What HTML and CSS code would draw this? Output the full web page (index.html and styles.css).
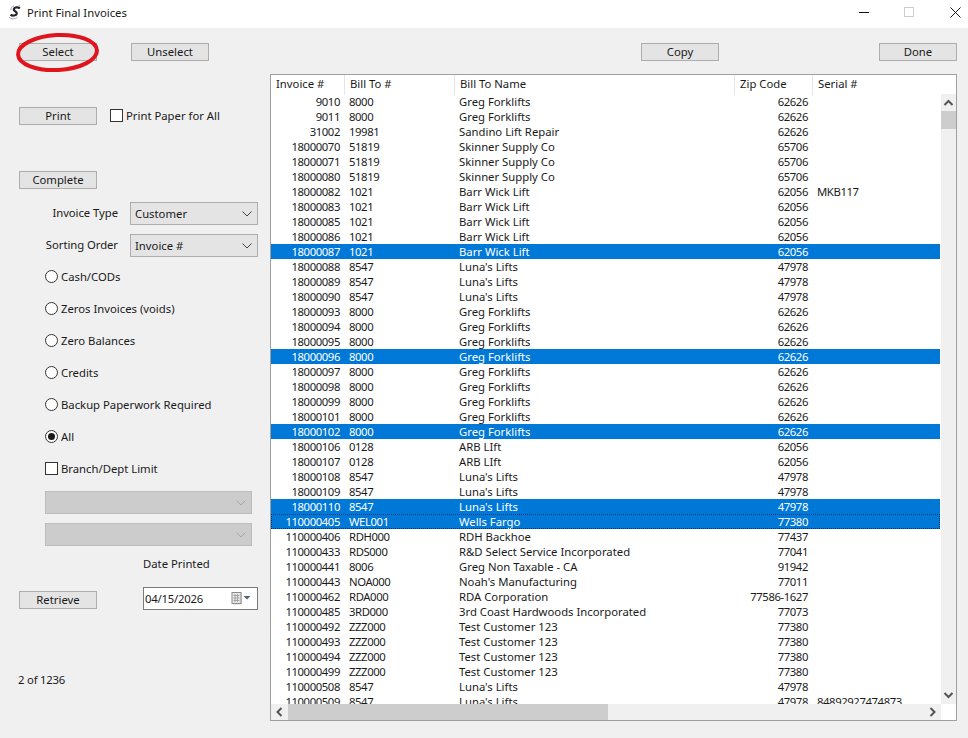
FILE: index.html
```html
<!DOCTYPE html>
<html lang="en">
<head>
<meta charset="utf-8">
<title>Print Final Invoices</title>
<link rel="stylesheet" href="styles.css">
</head>
<body>
<div class="window">
  <header class="titlebar">
    <svg class="app-icon" width="14" height="15" viewBox="0 0 14 15"><path d="M12 3.2 C10 2 6.5 2 5.8 4.2 C5.2 6.4 9.4 6 8.8 8.6 C8.2 10.8 4.5 11 2.5 9.8" fill="none" stroke="#22242c" stroke-width="2.2"/><path d="M10.5 1 L12 .5 M1 12 C3 14.500 7 14.500 9.500 12 M3 5 C2.500 3 4 1.500 6 1" fill="none" stroke="#9a9cc6" stroke-width="1"/></svg>
    <span class="title">Print Final Invoices</span>
    <div class="win-controls">
      <svg class="win-btn" width="10" height="10" viewBox="0 0 10 10"><path d="M0 5.500H10" stroke="#111" stroke-width="1"/></svg>
      <svg class="win-btn" width="10" height="10" viewBox="0 0 10 10"><rect x=".5" y=".5" width="9" height="9" fill="none" stroke="#ccc"/></svg>
      <svg class="win-btn" width="11" height="11" viewBox="0 0 11 11"><path d="M.5.5L10.500 10.500M10.500.5L.5 10.500" stroke="#111" stroke-width="1"/></svg>
    </div>
  </header>
  <div class="content">
    <div class="toolbar">
      <button class="btn">Select</button>
      <button class="btn unselect">Unselect</button>
      <button class="btn copy">Copy</button>
      <button class="btn done">Done</button>
    </div>
    <div class="main">
      <aside class="side">
        <div class="print-row">
          <button class="btn">Print</button>
          <label class="check-label"><span class="check"></span>Print Paper for All</label>
        </div>
        <button class="btn complete">Complete</button>
        <div class="field first-field"><span class="field-label">Invoice Type</span><div class="select"><span class="sel-text">Customer</span><svg class="chev" width="10" height="6" viewBox="0 0 10 6"><path d="M.5.5L5 5L9.500.5" fill="none" stroke="#444"/></svg></div></div>
        <div class="field"><span class="field-label">Sorting Order</span><div class="select"><span class="sel-text">Invoice #</span><svg class="chev" width="10" height="6" viewBox="0 0 10 6"><path d="M.5.5L5 5L9.500.5" fill="none" stroke="#444"/></svg></div></div>
        <div class="options">
          <label class="option"><span class="radio"></span>Cash/CODs</label>
          <label class="option"><span class="radio"></span>Zeros Invoices (voids)</label>
          <label class="option"><span class="radio"></span>Zero Balances</label>
          <label class="option"><span class="radio"></span>Credits</label>
          <label class="option"><span class="radio"></span>Backup Paperwork Required</label>
          <label class="option"><span class="radio on"></span>All</label>
          <label class="option"><span class="check"></span>Branch/Dept Limit</label>
        </div>
        <div class="select disabled first"><span></span><svg class="chev" width="10" height="6" viewBox="0 0 10 6"><path d="M.5.5L5 5L9.500.5" fill="none" stroke="#a8a8a8"/></svg></div>
        <div class="select disabled second"><span></span><svg class="chev" width="10" height="6" viewBox="0 0 10 6"><path d="M.5.5L5 5L9.500.5" fill="none" stroke="#a8a8a8"/></svg></div>
        <div class="date-label">Date Printed</div>
        <div class="retrieve-row">
          <button class="btn retrieve">Retrieve</button>
          <div class="date"><span class="num">04/15/2026</span>
            <svg class="cal" width="21" height="13" viewBox="0 0 21 13"><rect x="3" y="1.500" width="9" height="11" fill="#d8d8dc"/><rect x="2" y=".5" width="9" height="11" fill="#e8e8e8" stroke="#8a8a8a"/><path d="M3.500 3.500H9.500M3.500 6H9.500M3.500 8.500H9.500M5 2V10M7.500 2V10" stroke="#a5a5a5" stroke-width="1"/><path d="M13.500 4H20.500L17 7.500Z" fill="#4f6478"/></svg>
          </div>
        </div>
        <div class="count num">2 of 1236</div>
      </aside>
      <section class="list">
        <div class="list-head">
          <span class="h h1">Invoice #</span><span class="h h2">Bill To #</span><span class="h h3">Bill To Name</span><span class="h h4">Zip Code</span><span class="h h5">Serial #</span>
        </div>
        <div class="list-mid">
          <div class="viewport">
            <table class="rows">
              <colgroup><col class="c1"><col class="c2"><col class="c3"><col class="c4"><col class="c5"></colgroup>
              <tbody>
                <tr><td>9010</td><td>8000</td><td>Greg Forklifts</td><td>62626</td><td></td></tr>
                <tr><td>9011</td><td>8000</td><td>Greg Forklifts</td><td>62626</td><td></td></tr>
                <tr><td>31002</td><td>19981</td><td>Sandino Lift Repair</td><td>62626</td><td></td></tr>
                <tr><td>18000070</td><td>51819</td><td>Skinner Supply Co</td><td>65706</td><td></td></tr>
                <tr><td>18000071</td><td>51819</td><td>Skinner Supply Co</td><td>65706</td><td></td></tr>
                <tr><td>18000080</td><td>51819</td><td>Skinner Supply Co</td><td>65706</td><td></td></tr>
                <tr><td>18000082</td><td>1021</td><td>Barr Wick Lift</td><td>62056</td><td>MKB117</td></tr>
                <tr><td>18000083</td><td>1021</td><td>Barr Wick Lift</td><td>62056</td><td></td></tr>
                <tr><td>18000085</td><td>1021</td><td>Barr Wick Lift</td><td>62056</td><td></td></tr>
                <tr><td>18000086</td><td>1021</td><td>Barr Wick Lift</td><td>62056</td><td></td></tr>
                <tr class="sel"><td>18000087</td><td>1021</td><td>Barr Wick Lift</td><td>62056</td><td></td></tr>
                <tr><td>18000088</td><td>8547</td><td>Luna's Lifts</td><td>47978</td><td></td></tr>
                <tr><td>18000089</td><td>8547</td><td>Luna's Lifts</td><td>47978</td><td></td></tr>
                <tr><td>18000090</td><td>8547</td><td>Luna's Lifts</td><td>47978</td><td></td></tr>
                <tr><td>18000093</td><td>8000</td><td>Greg Forklifts</td><td>62626</td><td></td></tr>
                <tr><td>18000094</td><td>8000</td><td>Greg Forklifts</td><td>62626</td><td></td></tr>
                <tr><td>18000095</td><td>8000</td><td>Greg Forklifts</td><td>62626</td><td></td></tr>
                <tr class="sel"><td>18000096</td><td>8000</td><td>Greg Forklifts</td><td>62626</td><td></td></tr>
                <tr><td>18000097</td><td>8000</td><td>Greg Forklifts</td><td>62626</td><td></td></tr>
                <tr><td>18000098</td><td>8000</td><td>Greg Forklifts</td><td>62626</td><td></td></tr>
                <tr><td>18000099</td><td>8000</td><td>Greg Forklifts</td><td>62626</td><td></td></tr>
                <tr><td>18000101</td><td>8000</td><td>Greg Forklifts</td><td>62626</td><td></td></tr>
                <tr class="sel"><td>18000102</td><td>8000</td><td>Greg Forklifts</td><td>62626</td><td></td></tr>
                <tr><td>18000106</td><td>0128</td><td>ARB LIft</td><td>62056</td><td></td></tr>
                <tr><td>18000107</td><td>0128</td><td>ARB LIft</td><td>62056</td><td></td></tr>
                <tr><td>18000108</td><td>8547</td><td>Luna's Lifts</td><td>47978</td><td></td></tr>
                <tr><td>18000109</td><td>8547</td><td>Luna's Lifts</td><td>47978</td><td></td></tr>
                <tr class="sel"><td>18000110</td><td>8547</td><td>Luna's Lifts</td><td>47978</td><td></td></tr>
                <tr class="sel focus"><td>110000405</td><td>WEL001</td><td>Wells Fargo</td><td>77380</td><td></td></tr>
                <tr><td>110000406</td><td>RDH000</td><td>RDH Backhoe</td><td>77437</td><td></td></tr>
                <tr><td>110000433</td><td>RDS000</td><td>R&amp;D Select Service Incorporated</td><td>77041</td><td></td></tr>
                <tr><td>110000441</td><td>8006</td><td>Greg Non Taxable - CA</td><td>91942</td><td></td></tr>
                <tr><td>110000443</td><td>NOA000</td><td>Noah's Manufacturing</td><td>77011</td><td></td></tr>
                <tr><td>110000462</td><td>RDA000</td><td>RDA Corporation</td><td>77586-1627</td><td></td></tr>
                <tr><td>110000485</td><td>3RD000</td><td>3rd Coast Hardwoods Incorporated</td><td>77073</td><td></td></tr>
                <tr><td>110000492</td><td>ZZZ000</td><td>Test Customer 123</td><td>77380</td><td></td></tr>
                <tr><td>110000493</td><td>ZZZ000</td><td>Test Customer 123</td><td>77380</td><td></td></tr>
                <tr><td>110000494</td><td>ZZZ000</td><td>Test Customer 123</td><td>77380</td><td></td></tr>
                <tr><td>110000499</td><td>ZZZ000</td><td>Test Customer 123</td><td>77380</td><td></td></tr>
                <tr><td>110000508</td><td>8547</td><td>Luna's Lifts</td><td>47978</td><td></td></tr>
                <tr><td>110000509</td><td>8547</td><td>Luna's Lifts</td><td>47978</td><td>84892927474873</td></tr>
              </tbody>
            </table>
          </div>
          <div class="vbar">
            <svg class="arrow" width="15" height="17" viewBox="0 0 15 17"><path d="M3.500 11L7.500 7L11.500 11" fill="none" stroke="#555" stroke-width="2"/></svg>
            <div class="vthumb"></div>
            <svg class="arrow arrow-down" width="15" height="17" viewBox="0 0 15 17"><path d="M3.500 6L7.500 10L11.500 6" fill="none" stroke="#555" stroke-width="2"/></svg>
          </div>
        </div>
        <div class="list-foot">
          <div class="hbar">
            <svg class="arrow" width="17" height="16" viewBox="0 0 17 16"><path d="M10.500 4L6.500 8L10.500 12" fill="none" stroke="#555" stroke-width="2"/></svg>
            <div class="hthumb"></div>
            <svg class="arrow arrow-right" width="17" height="16" viewBox="0 0 17 16"><path d="M6.500 4L10.500 8L6.500 12" fill="none" stroke="#555" stroke-width="2"/></svg>
          </div>
          <div class="corner"></div>
        </div>
      </section>
    </div>
  </div>
  <svg class="ring" width="90" height="46" viewBox="0 0 90 46"><ellipse cx="45.500" cy="23.500" rx="39.500" ry="17.500" fill="none" stroke="#e0141c" stroke-width="4" transform="rotate(-3 45.500 23.500)"/></svg>
</div>
</body>
</html>
```
FILE: styles.css
```css
* { box-sizing: border-box; }
html, body { margin: 0; padding: 0; }
body { width: 968px; height: 738px; overflow: hidden; background: #f0f0f0; font: 11.3px/15px "Noto Sans", "Open Sans", sans-serif; color: #1a1a1a; }
.window { position: relative; width: 968px; height: 738px; display: flex; flex-direction: column; }
.titlebar { height: 28px; background: #fff; display: flex; align-items: center; padding: 0 0 3px 8px; flex: none; }
.app-icon { margin-right: 5px; }
.win-controls { margin-left: auto; display: flex; align-items: center; margin-top: -1px; }
.win-btn { display: block; }
.win-btn:nth-child(1) { margin-right: 35px; }
.win-btn:nth-child(2) { margin-right: 36px; }
.win-btn:nth-child(3) { margin-right: 7px; }
.content { flex: 1; display: flex; flex-direction: column; padding: 15px 11px 17px 19px; min-height: 0; }
.toolbar { display: flex; height: 18px; flex: none; }
.btn { width: 78px; height: 18px; padding: 0 0 1px; background: #e4e4e4; border: 1px solid #adadad; border-radius: 0; font: inherit; color: inherit; display: block; flex: none; }
.unselect { margin-left: 34px; }
.copy { margin-left: 432px; }
.done { margin-left: 160px; }
.main { flex: 1; display: flex; margin-top: 13px; min-height: 0; }
.side { width: 251px; flex: none; display: flex; flex-direction: column; }
.print-row { display: flex; align-items: center; margin-top: 33px; height: 18px; }
.check-label { display: flex; align-items: center; margin-left: 13px; margin-top: -1px; }
.check { width: 13px; height: 13px; background: #fff; border: 1px solid #333; margin-right: 3px; flex: none; }
.complete { margin-top: 46px; }
.field { display: flex; align-items: center; height: 23px; margin-top: 9px; }
.first-field { margin-top: 13px; }
.field-label { width: 111px; text-align: right; padding: 0 12px 2px 0; flex: none; letter-spacing: -.05px; }
.select { width: 128px; height: 23px; background: #e4e4e4; border: 1px solid #adadad; display: flex; align-items: center; justify-content: space-between; padding: 0 5px 0 4px; flex: none; }
.sel-text { padding-bottom: 1px; }
.select.disabled { width: 207px; margin-left: 26px; background: #cccccc; border-color: #bcbcbc; }
.select.first { margin-top: 7px; }
.select.second { margin-top: 9px; }
.chev { flex: none; }
.options { display: flex; flex-direction: column; margin-left: 26px; margin-top: 3px; }
.option { display: flex; align-items: center; height: 32px; }
.radio { width: 13px; height: 13px; border: 1px solid #333; border-radius: 50%; background: #fff; margin-right: 3px; flex: none; position: relative; }
.radio.on::after { content: ""; position: absolute; left: 2px; top: 2px; width: 7px; height: 7px; border-radius: 50%; background: #1a1a1a; }
.date-label { margin: 10px 0 0 124px; height: 15px; }
.retrieve-row { display: flex; align-items: flex-start; margin-top: 16px; height: 23px; }
.retrieve { margin-top: 4px; }
.date { width: 115px; height: 23px; margin-left: 46px; background: #fff; border: 1px solid #7a7a7a; display: flex; align-items: center; justify-content: space-between; padding: 0 6px 0 1px; }
.num { letter-spacing: -.2px; }
.cal { flex: none; }
.count { margin-top: 62px; margin-left: -1px; }
.list { width: 687px; flex: none; border: 1px solid #a0a0a0; background: #fff; display: flex; flex-direction: column; min-height: 0; }
.list-head { display: flex; height: 20px; flex: none; }
.h { padding-left: 5px; line-height: 18px; border-right: 1px solid #e5e5e5; height: 20px; flex: none; }
.h1 { width: 74px; }
.h2 { width: 110px; }
.h3 { width: 280px; }
.h4 { width: 78px; }
.h5 { flex: 1; border-right: 0; }
.list-mid { flex: 1; display: flex; min-height: 0; margin-top: -1px; }
.viewport { flex: 1; overflow: hidden; min-width: 0; }
.rows { width: 669px; table-layout: fixed; border-collapse: collapse; }
.c1 { width: 74px; }
.c2 { width: 109px; }
.c3 { width: 280px; }
.c4 { width: 78px; }
.rows td { height: 15px; padding: 0; white-space: nowrap; overflow: hidden; letter-spacing: -.4px; }
.rows td:nth-child(1) { text-align: right; padding-right: 5px; }
.rows td:nth-child(2) { padding-left: 4px; }
.rows td:nth-child(3) { padding-left: 5px; letter-spacing: 0; }
.rows td:nth-child(4) { text-align: right; padding-right: 4px; }
.rows td:nth-child(5) { padding-left: 5px; }
.sel td { background: #0078d7; color: #fff; }
.focus { outline: 1px dotted rgba(0, 30, 70, .7); outline-offset: -1px; }
.vbar { width: 15px; flex: none; background: #f0f0f0; display: flex; flex-direction: column; }
.arrow { display: block; flex: none; }
.arrow-down { margin-top: auto; }
.arrow-right { margin-left: auto; }
.vthumb { height: 18px; background: #cdcdcd; flex: none; }
.list-foot { display: flex; height: 16px; flex: none; }
.hbar { width: 670px; flex: none; background: #f0f0f0; display: flex; }
.hthumb { width: 320px; background: #cdcdcd; flex: none; }
.corner { flex: 1; background: #fff; }
.ring { position: absolute; left: 12px; top: 29px; }
```
